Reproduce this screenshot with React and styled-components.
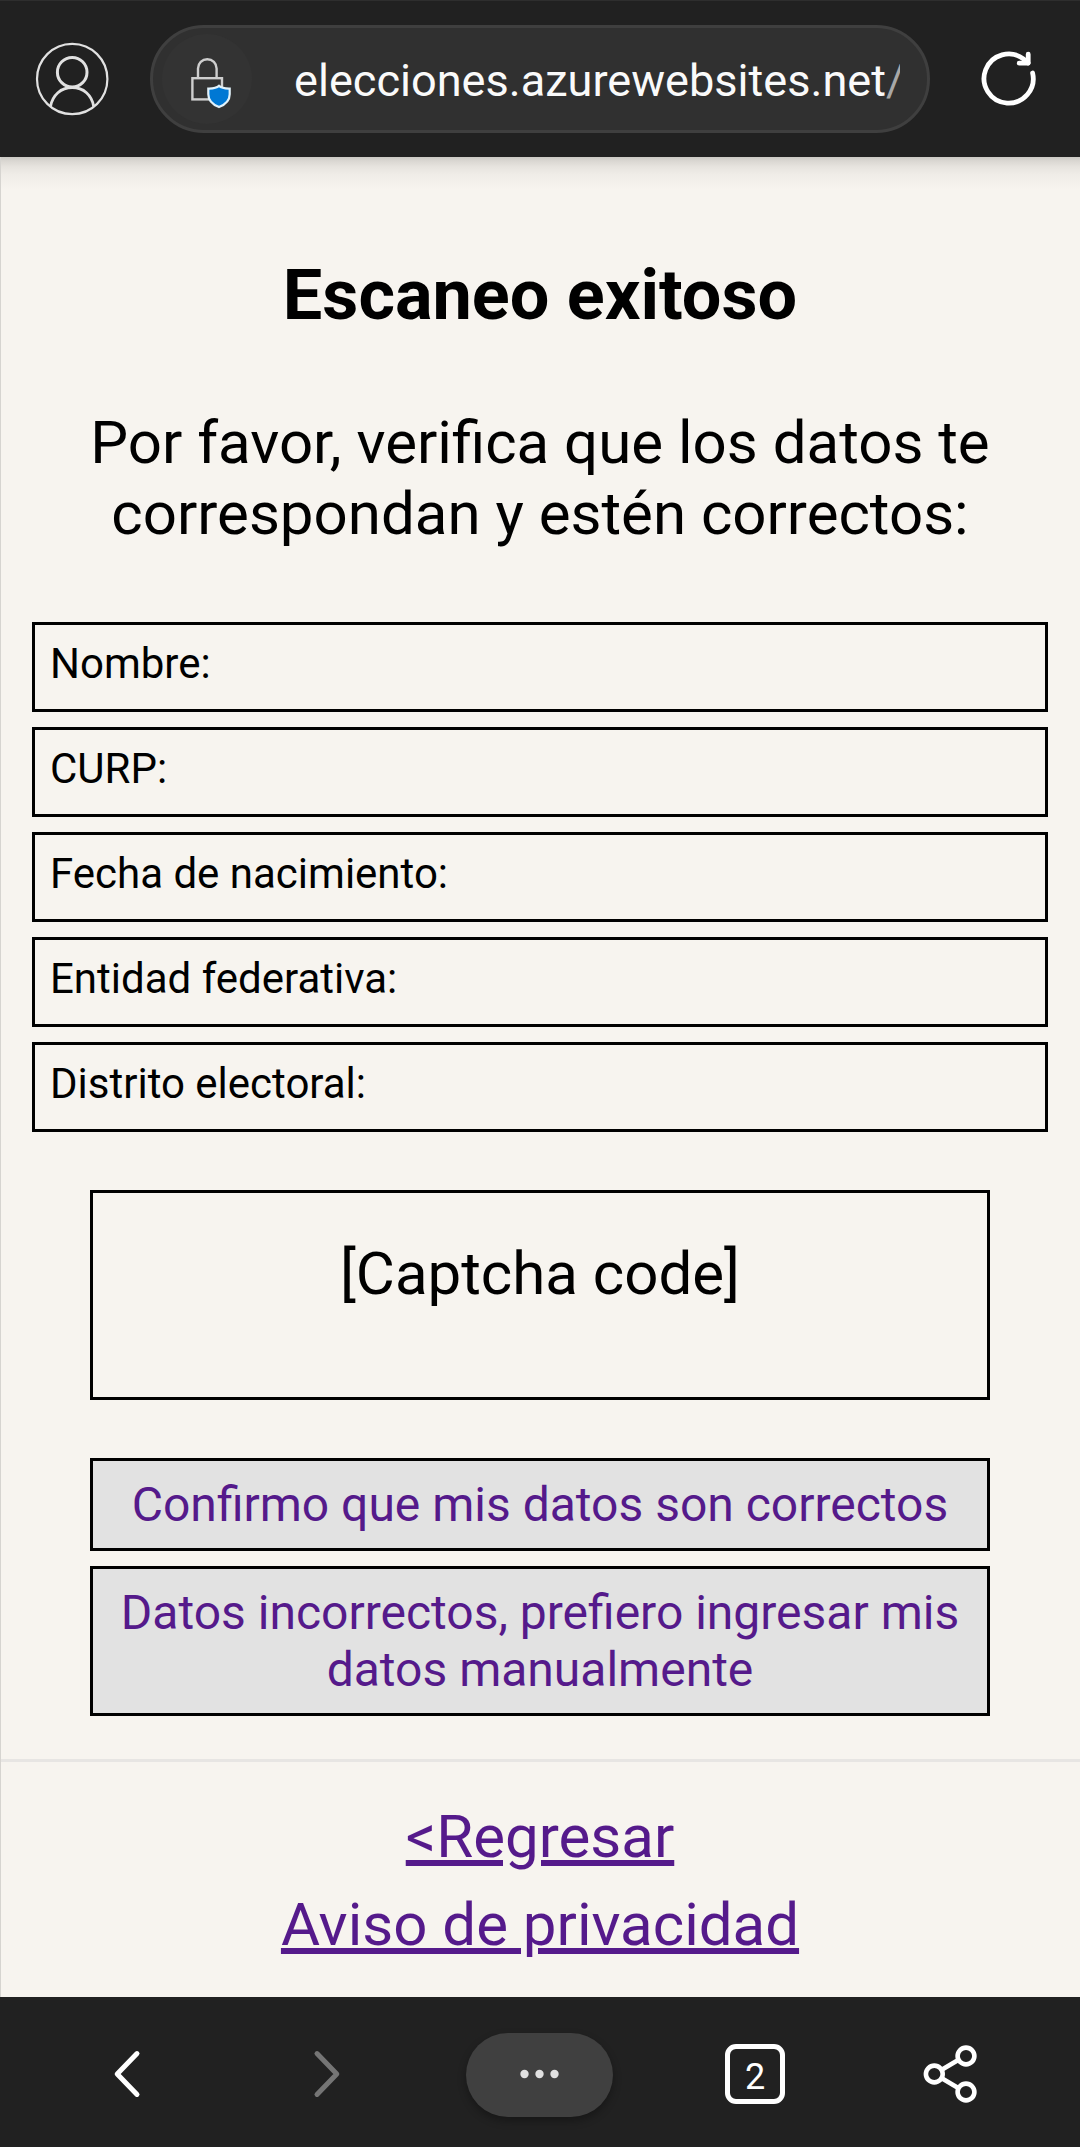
import React from "react";
import styled, { createGlobalStyle } from "styled-components";

const GlobalStyle = createGlobalStyle`
  *, *::before, *::after { box-sizing: border-box; }
  html, body { margin: 0; padding: 0; }
  body {
    background: #f7f4ef;
    font-family: Roboto, "Liberation Sans", sans-serif;
    color: #000;
  }
`;

const Screen = styled.div`
  display: flex;
  flex-direction: column;
  width: 1080px;
  height: 2147px;
  overflow: hidden;
`;

const TopBar = styled.header`
  flex: none;
  display: flex;
  align-items: center;
  height: 157px;
  padding: 0 0 0 35px;
  background: #212121;
  border-top: 1px solid #2e2e2e;
`;

const AddressPill = styled.div`
  flex: none;
  display: flex;
  align-items: center;
  width: 780px;
  height: 108px;
  margin-left: 41px;
  padding: 0 27px 0 9px;
  border: 3px solid #3f3f3f;
  border-radius: 54px;
  background: #303030;
`;

const SiteBadge = styled.span`
  flex: none;
  display: grid;
  place-items: center;
  width: 90px;
  height: 90px;
  border-radius: 50%;
  background: #333;
`;

const Address = styled.span`
  flex: 1;
  margin-left: 42px;
  padding-top: 4px;
  overflow: hidden;
  white-space: nowrap;
  font-size: 45.1px;
  line-height: 60px;
  color: #fafafa;
`;

const FadedChar = styled.span`
  color: #a8a8a8;
`;

const ReloadButton = styled.button`
  display: grid;
  margin: 0 0 2px 48px;
  padding: 0;
  border: 0;
  background: none;
`;

const Page = styled.main`
  flex: 1;
  min-height: 0;
  display: flex;
  flex-direction: column;
  border-left: 1px solid #d6d4d0;
  background: linear-gradient(
      to bottom,
      #cbc9c4 0,
      #dad7d2 4px,
      #e7e4df 10px,
      #f0ede8 18px,
      rgba(247, 244, 239, 0) 32px
    )
    no-repeat #f7f4ef;
`;

const Title = styled.h1`
  margin: 96px 1px 0 0;
  font-size: 70.2px;
  line-height: 84px;
  font-weight: 700;
  text-align: center;
`;

const Lead = styled.p`
  margin: 70px 60px 0 59px;
  font-size: 60px;
  line-height: 71px;
  text-align: center;
`;

const FieldList = styled.div`
  display: flex;
  flex-direction: column;
  gap: 15px;
  margin: 73px 32px 0 31px;
`;

const Field = styled.div`
  height: 90px;
  padding: 14px 15px;
  border: 3px solid #000;
  font-size: 42px;
  line-height: 49px;
`;

const Captcha = styled.div`
  height: 210px;
  margin: 58px 90px 0 89px;
  padding-top: 45px;
  border: 3px solid #000;
  font-size: 60px;
  line-height: 71px;
  text-align: center;
`;

const Actions = styled.div`
  display: flex;
  flex-direction: column;
  gap: 15px;
  margin: 58px 90px 0 89px;
`;

const ActionLink = styled.a`
  height: ${({ $height }) => $height}px;
  padding: 15px;
  border: 3px solid #000;
  background: #e2e2e2;
  font-size: 48px;
  line-height: 57px;
  text-align: center;
  color: #551a8b;
`;

const PageFooter = styled.footer`
  display: flex;
  flex-direction: column;
  align-items: center;
  gap: 17px;
  margin-top: 43px;
  padding: 39px 1px 0 0;
  border-top: 3px solid #e7e5e3;
`;

const FooterLink = styled.a`
  font-size: 60px;
  line-height: 71px;
  color: #551a8b;
  text-decoration: underline;
  text-decoration-thickness: 6px;
`;

const BottomBar = styled.nav`
  flex: none;
  display: grid;
  grid-template-columns: 226px 173px 253px 178px 212px;
  align-items: center;
  justify-items: center;
  height: 150px;
  padding: 4px 0 0 14px;
  background: #212121;
`;

const NavButton = styled.button`
  display: grid;
  place-items: center;
  padding: 0;
  border: 0;
  background: none;
  color: ${({ $dim }) => ($dim ? "#757575" : "#fff")};
`;

const MenuButton = styled(NavButton)`
  width: 147px;
  height: 84px;
  margin-top: 2px;
  padding-bottom: 2px;
  border-radius: 42px;
  background: #404040;
  box-shadow: 0 4px 8px rgba(0, 0, 0, 0.3);
`;

const TabCount = styled(NavButton)`
  width: 60px;
  height: 60px;
  padding-top: 5px;
  border: 5px solid #fff;
  border-radius: 11px;
  font-family: Roboto, "Liberation Sans", sans-serif;
  font-size: 36px;
  line-height: 42px;
`;

const ProfileIcon = () => (
  <svg width="74" height="74" viewBox="0 0 74 74" fill="none" stroke="#e1e1e1">
    <circle cx="37.2" cy="37" r="35.2" strokeWidth="2.2" />
    <circle cx="37.2" cy="30.2" r="14.8" strokeWidth="3" />
    <path d="M15.500 64.500C17.500 53 26 45.500 37.200 45.500s19.700 7.500 21.500 19" strokeWidth="2.8" />
  </svg>
);

const LockShieldIcon = () => (
  <svg width="90" height="90" viewBox="0 0 90 90" fill="none">
    <g stroke="#cecece" strokeWidth="2.4">
      <path d="M36 44V34.5a9.2 9.2 0 0 1 18.6 0V44" />
      <rect x="30.4" y="44.2" width="29.6" height="21.2" />
    </g>
    <path
      d="M57 51.8c-3 2.6-6.7 2.6-10.7 2.8v5.6c0 6.2 4 10.2 10.7 12.8 6.7-2.6 10.7-6.6 10.7-12.8v-5.6c-4-.2-7.7-.2-10.7-2.8z"
      fill="#0078d4"
      stroke="#e2f2fb"
      strokeWidth="2.2"
    />
  </svg>
);

const ReloadIcon = () => (
  <svg
    width="60"
    height="60"
    viewBox="0 0 60 60"
    fill="none"
    stroke="#fff"
    strokeWidth="4.8"
    strokeLinecap="round"
    strokeLinejoin="round"
  >
    <path d="M54.6 25A24.6 24.6 0 1 1 45.8 11.200L50 15" />
    <path d="M50.2 6.2V15.200H41.200" />
  </svg>
);

const Chevron = ({ flip }) => (
  <svg
    width="30"
    height="50"
    viewBox="0 0 30 50"
    fill="none"
    stroke="currentColor"
    strokeWidth="5"
    strokeLinecap="round"
    strokeLinejoin="round"
  >
    <path d={flip ? "M5 4.6 24.8 25 5 45.4" : "M25 4.6 5.2 25 25 45.4"} />
  </svg>
);

const DotsIcon = () => (
  <svg width="42" height="10" viewBox="0 0 42 10" fill="#e0e0e0">
    <circle cx="5.5" cy="5" r="4.2" />
    <circle cx="20.5" cy="5" r="4.2" />
    <circle cx="35.5" cy="5" r="4.2" />
  </svg>
);

const ShareIcon = () => (
  <svg width="60" height="62" viewBox="0 0 60 62" fill="none" stroke="#fff" strokeWidth="4.6">
    <path d="M22.2 26.5 37.8 17.3M22.2 35.5l15.6 9.2" />
    <circle cx="14.3" cy="31" r="8.4" />
    <circle cx="46" cy="13" r="8.4" />
    <circle cx="46" cy="49" r="8.4" />
  </svg>
);

const FIELDS = [
  "Nombre:",
  "CURP:",
  "Fecha de nacimiento:",
  "Entidad federativa:",
  "Distrito electoral:",
];

export default function App() {
  return (
    <>
      <GlobalStyle />
      <Screen>
        <TopBar>
          <ProfileIcon />
          <AddressPill>
            <SiteBadge>
              <LockShieldIcon />
            </SiteBadge>
            <Address>
              elecciones.azurewebsites.net<FadedChar>/</FadedChar>
            </Address>
          </AddressPill>
          <ReloadButton>
            <ReloadIcon />
          </ReloadButton>
        </TopBar>

        <Page>
          <Title>Escaneo exitoso</Title>
          <Lead>Por favor, verifica que los datos te correspondan y estén correctos:</Lead>
          <FieldList>
            {FIELDS.map((label) => (
              <Field key={label}>{label}</Field>
            ))}
          </FieldList>
          <Captcha>[Captcha code]</Captcha>
          <Actions>
            <ActionLink $height={93}>Confirmo que mis datos son correctos</ActionLink>
            <ActionLink $height={150}>
              Datos incorrectos, prefiero ingresar mis datos manualmente
            </ActionLink>
          </Actions>
          <PageFooter>
            <FooterLink>&lt;Regresar</FooterLink>
            <FooterLink>Aviso de privacidad</FooterLink>
          </PageFooter>
        </Page>

        <BottomBar>
          <NavButton>
            <Chevron />
          </NavButton>
          <NavButton $dim>
            <Chevron flip />
          </NavButton>
          <MenuButton>
            <DotsIcon />
          </MenuButton>
          <TabCount>2</TabCount>
          <NavButton>
            <ShareIcon />
          </NavButton>
        </BottomBar>
      </Screen>
    </>
  );
}
